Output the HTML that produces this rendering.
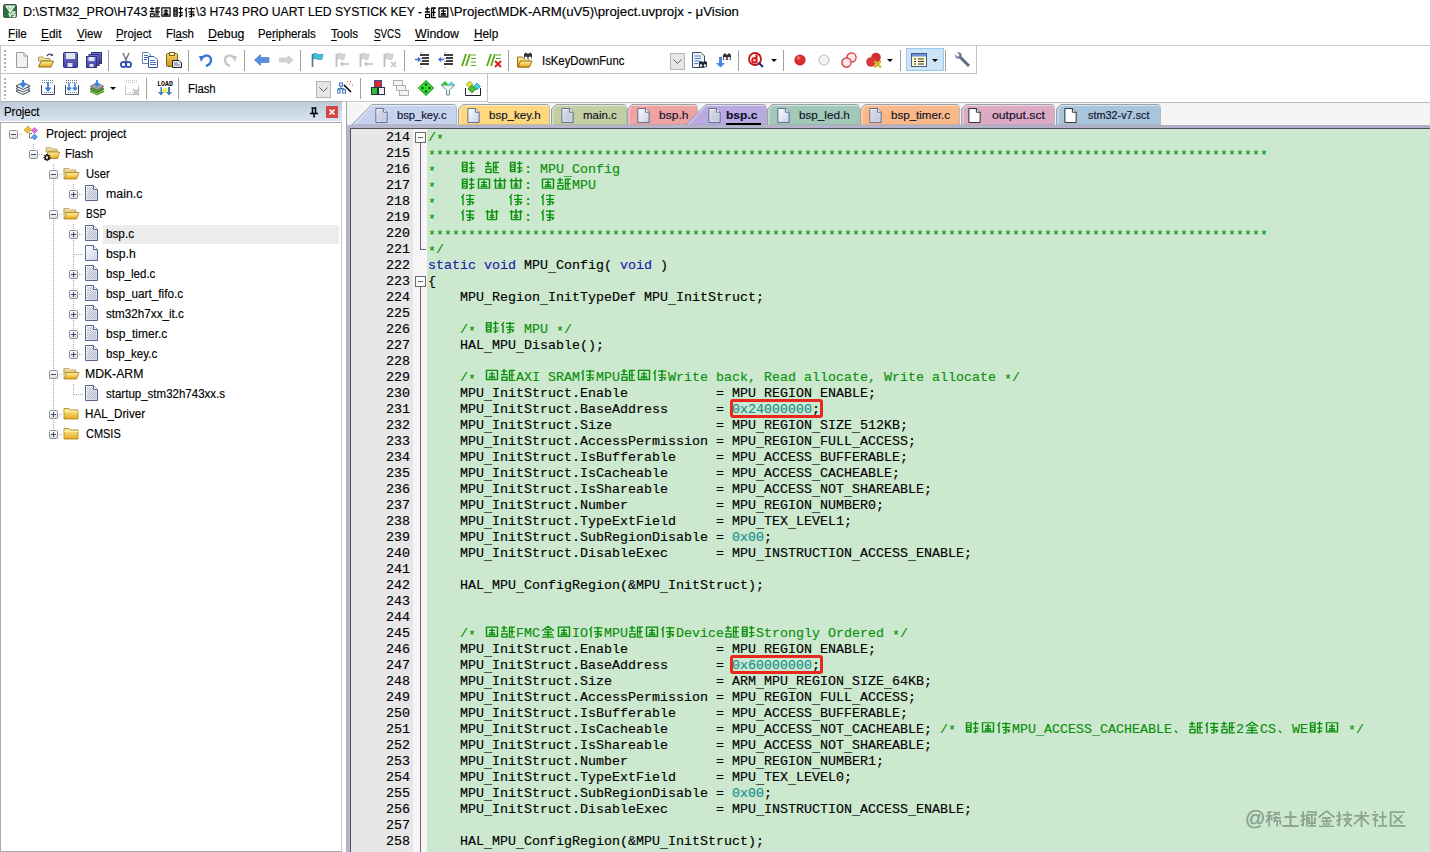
<!DOCTYPE html>
<html><head><meta charset="utf-8">
<style>
*{box-sizing:border-box}
html,body{margin:0;padding:0}
body{width:1430px;height:852px;overflow:hidden;position:relative;background:#fff;font-family:"Liberation Sans",sans-serif;color:#000}
.abs{position:absolute}
#title{left:0;top:0;width:1430px;height:23px;background:#fff}
#ticon{left:3px;top:4px;width:14px;height:14px;background:#2e7d3e;border-radius:2px}
#ttext{left:23px;top:3px;font-size:12px;line-height:16px;white-space:pre;color:#000;letter-spacing:0.15px}
.tcj{display:inline-block;width:12px;height:12px;vertical-align:-1px;margin:0 0.5px}
#menu{left:0;top:23px;width:1430px;height:22px}
.mi{position:absolute;top:4px;font-size:11.3px;line-height:14px;white-space:pre}
.fit{-webkit-text-stroke:0.15px currentColor}
.fit u{text-decoration:underline;text-underline-offset:1.5px;text-decoration-thickness:1px}
.mi u{text-decoration:none;border-bottom:1px solid #000}
svg{stroke-width:inherit}
#hl45{left:0;top:45px;width:1430px;height:1px;background:#c9c9c9}
.tb{position:absolute;background:#fff;border:1px solid #c4c4c4;border-top:none}
.sep{position:absolute;width:1px;background:#a0a0a0}
.grip{position:absolute;width:2px;background:repeating-linear-gradient(#b0b0b0 0 2px,transparent 2px 4px)}
.tbtext{font-size:11.3px;line-height:16px;white-space:pre}
#phdr{left:0;top:101px;width:342px;height:20px;background:linear-gradient(#bdcbd9,#d7e3ef);border-top:1px solid #a9b1b9}
#phdr span{position:absolute;left:4px;top:3px;font-size:12px;line-height:14px}
#tree{left:0;top:122px;width:342px;height:730px;border:1px solid #a8a8a8;border-right-color:#c8c8c8;background:#fff}
.tr{position:absolute;height:20px;font-size:11.5px;line-height:20px;white-space:pre}
.dv{position:absolute;width:1px;background:repeating-linear-gradient(#a8a8a8 0 1px,transparent 1px 2px)}
.dh{position:absolute;height:1px;background:repeating-linear-gradient(90deg,#a8a8a8 0 1px,transparent 1px 2px)}
#tabs{left:347px;top:103px;width:1083px;height:22px;background:#f5f5f5}
#vl346{left:346px;top:102px;width:1px;height:23px;background:#a4a4a4}
#hl101{left:488px;top:102px;width:942px;height:1px;background:#b8b8b8}
#inner{left:350px;top:128px;width:1080px;height:724px;background:#50505a}
#frame{left:346px;top:125px;width:1084px;height:727px;background:linear-gradient(90deg,#afadc3,#b8b6cc 3px,#b0aec6)}
#gut{left:351px;top:129px;width:62px;height:723px;background:#e7e7e7}
#fold{left:413px;top:129px;width:14px;height:723px;background:repeating-conic-gradient(#eeeeee 0 25%,#fefefe 0 50%) 0 0/2px 2px}
#code{left:427px;top:129px;width:1003px;height:723px;background:#cce8cf}
#nums{left:351px;top:130.25px;width:59px;text-align:right;font-family:"Liberation Mono",monospace;font-size:13.333px;line-height:17.3913px;color:#000;transform:scaleY(0.92);transform-origin:0 0;-webkit-text-stroke:0.15px #000}
#lines{left:428px;top:130.25px;font-family:"Liberation Mono",monospace;font-size:13.333px;line-height:17.3913px;white-space:pre;color:#000;transform:scaleY(0.92);transform-origin:0 0;-webkit-text-stroke:0.15px currentColor}
.ln{height:17.3913px}
.kw{color:#1a1aaa}
.cm{color:#0a900a}
.nm{color:#12918e}
.box{}
.st{position:relative;top:2px}
.us{position:relative;top:2px}
.rbox{position:absolute;width:93px;height:19px;border:3px solid #e8281e;border-radius:3px}
.cj{display:inline-block;width:16px;height:14.6px;margin-top:-1.6px;vertical-align:top;overflow:visible;-webkit-text-stroke:0;stroke-width:1.45}
</style></head><body>
<svg width="0" height="0" style="position:absolute">
<defs>

<linearGradient id="lg-box" x1="0" y1="0" x2="0" y2="1"><stop offset="0" stop-color="#ffffff"/><stop offset="1" stop-color="#dcdcdc"/></linearGradient>
<linearGradient id="lg-page" x1="0" y1="0" x2="1" y2="1"><stop offset="0" stop-color="#ffffff"/><stop offset="1" stop-color="#c8d0ec"/></linearGradient>
<linearGradient id="lg-fold" x1="0" y1="0" x2="0" y2="1"><stop offset="0" stop-color="#fff2a8"/><stop offset="1" stop-color="#e8a818"/></linearGradient>
<linearGradient id="lg-foldb" x1="0" y1="0" x2="0" y2="1"><stop offset="0" stop-color="#f4eab0"/><stop offset="1" stop-color="#d8c070"/></linearGradient>
<pattern id="pt-dots" width="2" height="2" patternUnits="userSpaceOnUse"><rect width="1" height="1" fill="#b8bcc8"/><rect x="1" y="1" width="1" height="1" fill="#b8bcc8"/></pattern>
<symbol id="i-minus" viewBox="0 0 9 9"><rect x="0.5" y="0.5" width="8" height="8" rx="1" fill="url(#lg-box)" stroke="#8e8e8e"/><path d="M2 4.5H7" stroke="#3a4a78"/></symbol>
<symbol id="i-plus" viewBox="0 0 9 9"><rect x="0.5" y="0.5" width="8" height="8" rx="1" fill="url(#lg-box)" stroke="#8e8e8e"/><path d="M2 4.5H7M4.5 2V7" stroke="#3a4a78"/></symbol>
<symbol id="i-filec" viewBox="0 0 13 16"><path d="M0.5 0.5H8.5L12.5 4.5V15.5H0.5Z" fill="url(#lg-page)" stroke="#56658a"/><path d="M2 2H8V6H11V14H2Z" fill="url(#pt-dots)"/><path d="M8.5 0.5V4.5H12.5" fill="#fff" stroke="#56658a"/></symbol>
<symbol id="i-fileh" viewBox="0 0 13 16"><path d="M0.5 0.5H8.5L12.5 4.5V15.5H0.5Z" fill="url(#lg-page)" stroke="#56658a"/><path d="M8.5 0.5V4.5H12.5" fill="#fff" stroke="#56658a"/></symbol>
<symbol id="i-filew" viewBox="0 0 13 16"><path d="M0.5 0.5H8.5L12.5 4.5V15.5H0.5Z" fill="#fff" stroke="#202020"/><path d="M8.5 0.5V4.5H12.5" fill="#fff" stroke="#202020"/></symbol>
<symbol id="i-fopen" viewBox="0 0 17 17"><path d="M1 3.5H6L7.5 5H13V8H1Z" fill="url(#lg-foldb)" stroke="#b8a060" stroke-width="0.8"/><path d="M1 14L3.5 7.5H16L13.5 14Z" fill="url(#lg-fold)" stroke="#a87808" stroke-width="0.8"/><path d="M1 3.5V14" stroke="#b8a060" stroke-width="0.8"/></symbol>
<symbol id="i-folder" viewBox="0 0 17 17"><path d="M1 3.5H6L7.5 5H15V14H1Z" fill="url(#lg-fold)" stroke="#a88010" stroke-width="0.8"/><path d="M1 6.5H15" stroke="#fff4b0" stroke-width="0.8"/></symbol>
<symbol id="i-flash" viewBox="0 0 17 17"><path d="M3 2.5H8L9.5 4H14V7H3Z" fill="url(#lg-foldb)" stroke="#b8a060" stroke-width="0.8"/><path d="M3 13.5L5 7H16.5L14.5 13.5Z" fill="url(#lg-fold)" stroke="#a87808" stroke-width="0.8"/><g stroke="#000" stroke-width="1.3"><path d="M4 9V16M0.5 12.5H7.5M1.5 10L6.5 15M6.5 10L1.5 15"/></g><circle cx="4" cy="12.5" r="1.2" fill="#fff"/></symbol>
<symbol id="i-proj" viewBox="0 0 17 17"><path d="M9 8.5H6.5V13H9" fill="none" stroke="#707880"/><path d="M1 5L5 1L8.5 4.5L4.5 8.5Z" fill="#e8c040" stroke="#c09010" stroke-width="0.6"/><path d="M8.5 5.5L11.5 2.5L14.5 5.5L11.5 8.5Z" fill="#e870e0" stroke="#b040b0" stroke-width="0.6"/><path d="M8.5 12L11.5 9L14.5 12L11.5 15Z" fill="#60a0f0" stroke="#3070c0" stroke-width="0.6"/></symbol>

<linearGradient id="lg-flop" x1="0" y1="0" x2="0" y2="1"><stop offset="0" stop-color="#7878d0"/><stop offset="1" stop-color="#4040a0"/></linearGradient>
<linearGradient id="lg-clip" x1="0" y1="0" x2="0" y2="1"><stop offset="0" stop-color="#f8d860"/><stop offset="1" stop-color="#c89020"/></linearGradient>
<symbol id="t-new" viewBox="0 0 16 16"><path d="M2.5 0.5H10L13.5 4V15.5H2.5Z" fill="#f2f2f6" stroke="#9a9a9a"/><path d="M10 0.5V4H13.5" fill="#fff" stroke="#9a9a9a"/></symbol>
<symbol id="t-open" viewBox="0 0 16 16"><path d="M0.5 5H5L6.5 6.5H12V9H0.5Z" fill="#efe0a0" stroke="#a08840" stroke-width="0.8"/><path d="M0.5 15L3 9H15.5L13 15Z" fill="url(#lg-fold)" stroke="#8a6408" stroke-width="0.9"/><path d="M9 4C10 1.5 13 1.5 14 3.5" fill="none" stroke="#3a3a5a" stroke-width="1.2"/><path d="M12.5 3.5L15 4L14.5 1.5Z" fill="#3a3a5a"/></symbol>
<symbol id="t-save" viewBox="0 0 16 16"><rect x="0.5" y="0.5" width="14" height="15" rx="1" fill="url(#lg-flop)" stroke="#303080"/><rect x="3" y="1" width="9" height="6" fill="#dde8f0"/><rect x="4.5" y="11" width="5" height="4" fill="#e0e0f0"/></symbol>
<symbol id="t-saveall" viewBox="0 0 16 16"><rect x="5.5" y="0.5" width="10" height="11" fill="url(#lg-flop)" stroke="#303080"/><rect x="3" y="2.5" width="10" height="11" fill="url(#lg-flop)" stroke="#303080"/><rect x="0.5" y="4.5" width="10" height="11" fill="url(#lg-flop)" stroke="#303080"/><rect x="2.5" y="5" width="6" height="4" fill="#dde8f0"/><rect x="3.5" y="12" width="4" height="3" fill="#e0e0f0"/></symbol>
<symbol id="t-cut" viewBox="0 0 16 16"><path d="M5 1L9 10M11 1L7 10" stroke="#707070" stroke-width="1.4"/><circle cx="5.5" cy="12.5" r="2.6" fill="none" stroke="#3050b8" stroke-width="1.8"/><circle cx="10.5" cy="12.5" r="2.6" fill="none" stroke="#3050b8" stroke-width="1.8"/></symbol>
<symbol id="t-copy" viewBox="0 0 16 16"><path d="M0.5 0.5H6L8.5 3V11.5H0.5Z" fill="#fff" stroke="#7080b0"/><path d="M6.5 4.5H12L15.5 8V15.5H6.5Z" fill="#fff" stroke="#3858a8"/><path d="M8 8.5H13M8 10.5H14M8 12.5H14M2 3.5H6M2 5.5H6M2 7.5H5" stroke="#4a6ac0" stroke-width="1"/></symbol>
<symbol id="t-paste" viewBox="0 0 16 16"><rect x="0.5" y="1.5" width="11" height="13" rx="1" fill="url(#lg-clip)" stroke="#806020"/><rect x="3.5" y="0.5" width="5" height="3" fill="#f8f0c0" stroke="#806020"/><path d="M6.5 8.5H13L15.5 11V15.5H6.5Z" fill="#e8ecf4" stroke="#202020"/><path d="M8 11H12M8 13H14" stroke="#6878a0"/></symbol>
<symbol id="t-undo" viewBox="0 0 16 16"><path d="M4 6C7 2 13 3 13 8C13 11 11 13 8 14" fill="none" stroke="#3a78d8" stroke-width="2.4"/><path d="M1 4L6.5 4L3 10Z" fill="#3a78d8"/></symbol>
<symbol id="t-redo" viewBox="0 0 16 16"><path d="M12 6C9 2 3 3 3 8C3 11 5 13 8 14" fill="none" stroke="#c8c8c8" stroke-width="2.4"/><path d="M15 4L9.5 4L13 10Z" fill="#c8c8c8"/></symbol>
<symbol id="t-back" viewBox="0 0 16 16"><path d="M0.5 8L6.5 2.5V5.5H15V10.5H6.5V13.5Z" fill="#5890e0" stroke="#3a70c8" stroke-width="0.6"/></symbol>
<symbol id="t-fwd" viewBox="0 0 16 16"><path d="M15.5 8L9.5 2.5V5.5H1V10.5H9.5V13.5Z" fill="#d0d0d0"/></symbol>
<symbol id="t-flag" viewBox="0 0 16 16"><path d="M2.5 2V15" stroke="#607080" stroke-width="1.6"/><path d="M3 2C6 0 8 4 13 2L12 7C8 9 6 5 3 7Z" fill="#40c0d8" stroke="#2090a8" stroke-width="0.7"/></symbol>
<symbol id="t-flagg" viewBox="0 0 16 16"><path d="M2.5 2V15" stroke="#c0c0c0" stroke-width="1.8"/><path d="M3 2C6 0 8 4 11 2L10 7C7 9 6 5 3 7Z" fill="#d4d4d4" stroke="#c0c0c0" stroke-width="0.8"/><path d="M7 12H15M9 10L7 12L9 14" fill="none" stroke="#c0c0c0" stroke-width="1.5"/></symbol>
<symbol id="t-flagx" viewBox="0 0 16 16"><path d="M2.5 2V15" stroke="#c0c0c0" stroke-width="1.8"/><path d="M3 2C6 0 8 4 11 2L10 7C7 9 6 5 3 7Z" fill="#d4d4d4" stroke="#c0c0c0" stroke-width="0.8"/><path d="M9 10L14 15M14 10L9 15" stroke="#c0c0c0" stroke-width="1.4"/></symbol>
<symbol id="t-indent" viewBox="0 0 16 16"><path d="M6 3H15M8 6H15M8 9H15M6 12H15" stroke="#000" stroke-width="1.6"/><path d="M1 7.5H6M4 5.5L6 7.5L4 9.5" fill="none" stroke="#3a70d8" stroke-width="1.3"/><path d="M7 0V16" stroke="#000" stroke-width="0.6" stroke-dasharray="1 2"/></symbol>
<symbol id="t-unindent" viewBox="0 0 16 16"><path d="M6 3H15M8 6H15M8 9H15M6 12H15" stroke="#000" stroke-width="1.6"/><path d="M1 7.5H6M3 5.5L1 7.5L3 9.5" fill="none" stroke="#3a70d8" stroke-width="1.3"/><path d="M7 0V16" stroke="#000" stroke-width="0.6" stroke-dasharray="1 2"/></symbol>
<symbol id="t-cmt" viewBox="0 0 16 16"><path d="M1 14L5 2M5 14L9 2" stroke="#58a818" stroke-width="1.8"/><path d="M10 3H15M10 6.5H15M10 10H15M10 13.5H15" stroke="#58a818" stroke-width="1"/></symbol>
<symbol id="t-uncmt" viewBox="0 0 16 16"><path d="M1 14L5 2M5 14L9 2" stroke="#58a818" stroke-width="1.8"/><path d="M10 3H15M10 6.5H15" stroke="#58a818" stroke-width="1"/><path d="M9 9L15 15M15 9L9 15" stroke="#e02020" stroke-width="2"/></symbol>
<symbol id="t-findf" viewBox="0 0 16 16"><path d="M0.5 5H5L6.5 6.5H12V15H0.5Z" fill="url(#lg-fold)" stroke="#8a6408" stroke-width="0.9"/><path d="M1 15L3.5 9H15L12.5 15Z" fill="url(#lg-fold)" stroke="#8a6408" stroke-width="0.9"/><path d="M7 2L9 0.5L11 2L13 0.5L15 2V7H7Z" fill="#303040"/><circle cx="9" cy="6" r="1.6" fill="#fff"/><circle cx="13" cy="6" r="1.6" fill="#fff"/></symbol>
<symbol id="t-find" viewBox="0 0 16 16"><path d="M0.5 0.5H9L12.5 4V15.5H0.5Z" fill="#eef2fa" stroke="#404a60"/><path d="M2.5 4H9M2.5 6.5H9M2.5 9H8M2.5 11.5H6" stroke="#4a7ad0" stroke-width="1.2"/><path d="M7 10L9 9L11 10L13 9L15 10V15H7Z" fill="#202830"/><circle cx="9" cy="13.5" r="1.2" fill="#fff"/><circle cx="13" cy="13.5" r="1.2" fill="#fff"/></symbol>
<symbol id="t-incf" viewBox="0 0 16 16"><path d="M3 5V11H0L4.5 15.5L9 11H6V5Z" fill="#4a88e0"/><path d="M7 3L9 1L11 3L13 1L15 3V8H7Z" fill="#303040"/><circle cx="9" cy="6.5" r="1.4" fill="#fff"/><circle cx="13" cy="6.5" r="1.4" fill="#fff"/></symbol>
<symbol id="t-debug" viewBox="0 0 16 16"><circle cx="7" cy="7" r="6" fill="#fff" stroke="#c01818" stroke-width="1.8"/><path d="M8.5 2.5V11M8.5 7.5A2.2 2.2 0 1 0 8.5 9" fill="none" stroke="#e02020" stroke-width="2.2"/><path d="M11 11L15 15" stroke="#202890" stroke-width="2.2"/></symbol>
<symbol id="t-bp" viewBox="0 0 16 16"><circle cx="8" cy="8" r="5.6" fill="#d82c2c"/><circle cx="6.5" cy="6" r="2" fill="#f08080" opacity="0.7"/></symbol>
<symbol id="t-bpg" viewBox="0 0 16 16"><circle cx="8" cy="8" r="5" fill="#f4f4f4" stroke="#c8c8c8" stroke-width="1.2"/></symbol>
<symbol id="t-bp2" viewBox="0 0 16 16"><circle cx="10.5" cy="5.5" r="4.6" fill="#fde8e8" stroke="#d02828" stroke-width="1.2"/><circle cx="5.5" cy="10.5" r="4.6" fill="#fde8e8" stroke="#d02828" stroke-width="1.2"/></symbol>
<symbol id="t-bpx" viewBox="0 0 16 16"><circle cx="10" cy="5.5" r="4.8" fill="#d03030"/><circle cx="5" cy="10" r="4.8" fill="#d83838"/><path d="M8.5 9L15 15.5M15 9L8.5 15.5" stroke="#c8b818" stroke-width="2.2"/></symbol>
<symbol id="t-win" viewBox="0 0 16 16"><rect x="0.5" y="1.5" width="15" height="13" fill="#fffbd0" stroke="#485890"/><rect x="1" y="2" width="14" height="2.5" fill="#6a90d8"/><path d="M3 7H5M3 9.5H5M3 12H5M7 7H13M7 9.5H13M7 12H13" stroke="#303030" stroke-width="1.1"/></symbol>
<symbol id="t-wrench" viewBox="0 0 16 16"><path d="M3 3L14 14" stroke="#5c6c88" stroke-width="3"/><circle cx="3.5" cy="3.5" r="3.2" fill="#6c7ca0"/><path d="M1.5 0L4.5 3L2.5 5L0 2Z" fill="#fff"/></symbol>
<symbol id="t-dl" viewBox="0 0 16 16"><path d="M1 11L8 7.5L15 11L8 14.5Z" fill="#fff" stroke="#404858"/><path d="M1 8.5L8 5L15 8.5L8 12Z" fill="#fff" stroke="#404858"/><path d="M1 6L8 2.5L15 6L8 9.5Z" fill="#f0f4ff" stroke="#404858"/><path d="M8 0V6M5.5 3.5L8 6.5L10.5 3.5" fill="none" stroke="#3a80e0" stroke-width="2"/></symbol>
<pattern id="pt-d2" width="2" height="2" patternUnits="userSpaceOnUse"><rect width="1" height="1" fill="#6a7890"/></pattern><pattern id="pt-d2g" width="2" height="2" patternUnits="userSpaceOnUse"><rect width="1" height="1" fill="#c4c4c4"/></pattern>
<symbol id="t-trans" viewBox="0 0 16 16"><path d="M1.5 5V14.5H14.5V5" fill="none" stroke="#404858"/><rect x="2" y="0" width="12" height="4" fill="url(#pt-d2)"/><rect x="3" y="12" width="10" height="2" fill="url(#pt-d2)"/><path d="M8 2V10M5.5 7.5L8 10.5L10.5 7.5" fill="none" stroke="#3a80e0" stroke-width="1.8"/></symbol>
<symbol id="t-build" viewBox="0 0 16 16"><path d="M1.5 5V14.5H14.5V5" fill="none" stroke="#404858"/><rect x="2" y="0" width="12" height="4" fill="url(#pt-d2)"/><rect x="3" y="12" width="10" height="2" fill="url(#pt-d2)"/><path d="M5 3V10M3 7.5L5 10L7 7.5M11 3V10M9 7.5L11 10L13 7.5" fill="none" stroke="#3a80e0" stroke-width="1.5"/></symbol>
<symbol id="t-rebuild" viewBox="0 0 16 16"><path d="M1 11.5L8 8L15 11.5L8 15Z" fill="#80c040" stroke="#408020" stroke-width="0.8"/><path d="M1 9L8 5.5L15 9L8 12.5Z" fill="#60a030" stroke="#306818" stroke-width="0.8"/><path d="M1 6.5L8 3L15 6.5L8 10Z" fill="#a0a0a8" stroke="#606068" stroke-width="0.8"/><path d="M8 0V5M6 3L8 5.5L10 3" fill="none" stroke="#3a80e0" stroke-width="1.8"/></symbol>
<symbol id="t-stop" viewBox="0 0 16 16"><path d="M1.5 5V14.5H14.5V5" fill="none" stroke="#c8c8c8"/><rect x="2" y="0" width="12" height="4" fill="url(#pt-d2g)"/><rect x="3" y="12" width="10" height="2" fill="url(#pt-d2g)"/><path d="M9 9L15 15M15 9L9 15" stroke="#c0c0c0" stroke-width="1.8"/></symbol>
<symbol id="t-load" viewBox="0 0 16 16"><text x="8" y="6" font-family="Liberation Mono" font-size="6.5" font-weight="bold" text-anchor="middle" fill="#000">LOAD</text><path d="M3.5 7V12H1L4 15.5L7 12H5V7ZM11 7V12H9L12 15.5L15 12H13V7Z" fill="#3a78d8"/><circle cx="8" cy="10.5" r="2.5" fill="#f0f040"/></symbol>
<symbol id="t-wiz" viewBox="0 0 16 16"><path d="M4 4V7M1 10V8.5H7V10M4 7V10" fill="none" stroke="#3a70c0"/><rect x="2.5" y="3" width="3" height="3" fill="#fff" stroke="#3a70c0"/><rect x="0" y="10" width="3" height="3" fill="#fff" stroke="#3a70c0"/><rect x="5.5" y="10" width="3" height="3" fill="#fff" stroke="#3a70c0"/><path d="M7 5L14 12" stroke="#000" stroke-width="1.6"/><path d="M10 1L11 2M13 2L14 1M15 5L16 5M12 4L13 4" stroke="#d04040"/></symbol>
<symbol id="t-blocks" viewBox="0 0 16 16"><rect x="4.5" y="0.5" width="7" height="7" fill="#e02828" stroke="#3050a0"/><rect x="1.5" y="7.5" width="6" height="7" fill="#30c030" stroke="#203040"/><rect x="8.5" y="7.5" width="6" height="7" fill="#f0f0f0" stroke="#203040"/></symbol>
<symbol id="t-wins" viewBox="0 0 16 16"><rect x="0.5" y="0.5" width="9" height="5" fill="#f4f4f4" stroke="#b0b0b0"/><rect x="3.5" y="5.5" width="9" height="5" fill="#f4f4f4" stroke="#b0b0b0"/><rect x="6.5" y="10.5" width="9" height="5" fill="#f4f4f4" stroke="#b0b0b0"/></symbol>
<symbol id="t-dia" viewBox="0 0 16 16"><path d="M8 0.5L15.5 8L8 15.5L0.5 8Z" fill="#30d830" stroke="#108010"/><circle cx="8" cy="4.5" r="1" fill="#000"/><circle cx="4.5" cy="8" r="1" fill="#000"/><circle cx="11.5" cy="8" r="1" fill="#000"/><circle cx="8" cy="11.5" r="1" fill="#000"/></symbol>
<symbol id="t-funnel" viewBox="0 0 16 16"><path d="M1 5H15L9.5 10V15H6.5V10Z" fill="#e8f8f8" stroke="#708890"/><path d="M1 5L5 1L9 5Z" fill="#30c030"/><path d="M8 5L11.5 1.5L15 5Z" fill="#40d0e0"/></symbol>
<symbol id="t-multi" viewBox="0 0 16 16"><path d="M0.5 8V15.5H15.5V8" fill="#fff" stroke="#202020"/><path d="M4.5 1L8 4.5L4.5 8L1 4.5Z" fill="#e0e040" stroke="#808020" stroke-width="0.6"/><path d="M12 3L15.5 6.5L12 10L8.5 6.5Z" fill="#40d0e0" stroke="#208090" stroke-width="0.6"/><path d="M7 5L11 9L7 13L3 9Z" fill="#50c030" stroke="#206010" stroke-width="0.6"/></symbol>

<symbol id="w-xi" viewBox="0 0 16 16"><path d="M1 5H7M4 1.5V15M4 6L1 11M4 6L7 9M2 2L6 1M8 1.5L14 4M14 1.5L8 4M7.5 7H15M10.5 5L8.5 11M9 9.5H14.5V13.5M11.5 9.5V15" stroke="currentColor" stroke-width="1.3" fill="none"/></symbol>
<symbol id="w-tu" viewBox="0 0 16 16"><path d="M2.5 6H13.5M8 1V14M0.5 14.5H15.5" stroke="currentColor" stroke-width="1.5" fill="none"/></symbol>
<symbol id="w-jue" viewBox="0 0 16 16"><path d="M0.5 5H5M3 1V14L1 13M0.5 10L5 8M6.5 1.5H15V4H6.5V15M8.5 6V12H14V6M11.2 5V14M8 14.5H15" stroke="currentColor" stroke-width="1.3" fill="none"/></symbol>
<symbol id="w-jin" viewBox="0 0 16 16"><path d="M8 0.5L0.5 6.5M8 0.5L15.5 6.5M4 7H12M3 10H13M8 7V15M5 11.5L6 13.5M11 11.5L10 13.5M1 15H15" stroke="currentColor" stroke-width="1.3" fill="none"/></symbol>
<symbol id="w-ji" viewBox="0 0 16 16"><path d="M0.5 5H5M3 1V14L1 13M0.5 10L5 8M6.5 4H15M10.8 1V8M7 8H14L8 15M8.5 9.5L15 15" stroke="currentColor" stroke-width="1.3" fill="none"/></symbol>
<symbol id="w-shu" viewBox="0 0 16 16"><path d="M1 5H15M8 1V15.5M8 6L1 13M8 6L15 13M11 1.5L12.5 3" stroke="currentColor" stroke-width="1.4" fill="none"/></symbol>
<symbol id="w-she" viewBox="0 0 16 16"><path d="M3 0.5L4 2M1 4H6L2 9M4 7V15.5M4 8L6.5 10M7.5 6H14.5M11 1V14.5M6.5 14.5H15.5" stroke="currentColor" stroke-width="1.3" fill="none"/></symbol>
<symbol id="w-qu" viewBox="0 0 16 16"><path d="M15 1.5H1.5V14.5H15.5M4.5 4.5L12.5 12M12.5 4.5L4.5 12" stroke="currentColor" stroke-width="1.4" fill="none"/></symbol>

<symbol id="g0" viewBox="0 0 16 16"><path d="M1.5 3.5H7M4 1V7M1 7.5H7.5M2 10V15M2 10.5H7V14.5H2M9 2.5H15M9.5 2.5V15M9.5 8H14.5M12 3V13M9.5 14.5H15" stroke="currentColor" fill="none"/></symbol>
<symbol id="g1" viewBox="0 0 16 16"><path d="M2.5 2V14M2.5 2.5H7V13.5H2.5M2.5 8H7M2.5 5.5H7M2.5 11H7M9 3.5H14.5M11.5 1V15M9 9H14.5M9.5 14L14.5 12" stroke="currentColor" fill="none"/></symbol>
<symbol id="g2" viewBox="0 0 16 16"><path d="M1.5 4.5H14.5M3.5 2V14M12.5 2V14M3.5 13.5H12.5M6 8.5H10M8 5V13M5.5 11H10.5M8 1V4" stroke="currentColor" fill="none"/></symbol>
<symbol id="g3" viewBox="0 0 16 16"><path d="M2.5 2.5H13.5V13.5H2.5ZM5 6.5H11M5 9.5H11M8 4V12M4.5 11.5H11.5" stroke="currentColor" fill="none"/></symbol>
<symbol id="g4" viewBox="0 0 16 16"><path d="M1.5 6L4 2M3 5V15M6 3.5H14.5M6 8H14M10 2V14.5H7M14 11L12 14M7 11H13" stroke="currentColor" fill="none"/></symbol>
<symbol id="g5" viewBox="0 0 16 16"><path d="M8 1.5L2 7M8 1.5L14 7M4 8.5H12M3 11.5H13M8 7V15M2 14.5H14M5 5.5H11" stroke="currentColor" fill="none"/></symbol>
<symbol id="gp" viewBox="0 0 16 16"><path d="M3 12L5 14.5" stroke="currentColor" stroke-width="1.5" fill="none"/></symbol>
</defs></svg>
<div id="title" class="abs">
  <svg class="abs" style="left:3px;top:4px" width="14" height="14"><rect x="0.5" y="0.5" width="13" height="13" rx="1.5" fill="#2d7042" stroke="#3c5a46"/><path d="M2 1.5H12.5L7.2 9.5Z" fill="#e4fae6"/><path d="M5.2 3L6.2 5.5M8.8 3L8 5.5" stroke="#4a8a5a" stroke-width="0.7"/><path d="M5.8 9L7.2 12.5L8.6 9" fill="none" stroke="#e4fae6" stroke-width="1.3"/><path d="M12.5 8H9.8V10.2H12V12.5H9.3" fill="none" stroke="#f0fff0" stroke-width="1.3"/></svg>
  
</div>
<div id="hl45" class="abs"></div>
<div class="tb" style="left:0;top:46px;width:977px;height:28px"></div>
<div class="tb" style="left:0;top:74px;width:488px;height:28px"></div>
<div class="grip" style="left:4px;top:50px;height:21px"></div><div class="grip" style="left:4px;top:78px;height:21px"></div><svg class="abs" style="left:14px;top:52px" width="16" height="16"><use href="#t-new"/></svg><svg class="abs" style="left:38px;top:52px" width="16" height="16"><use href="#t-open"/></svg><svg class="abs" style="left:63px;top:52px" width="16" height="16"><use href="#t-save"/></svg><svg class="abs" style="left:86px;top:52px" width="16" height="16"><use href="#t-saveall"/></svg><div class="sep" style="left:108px;top:50px;height:21px"></div><svg class="abs" style="left:118px;top:52px" width="16" height="16"><use href="#t-cut"/></svg><svg class="abs" style="left:142px;top:52px" width="16" height="16"><use href="#t-copy"/></svg><svg class="abs" style="left:166px;top:52px" width="16" height="16"><use href="#t-paste"/></svg><div class="sep" style="left:188px;top:50px;height:21px"></div><svg class="abs" style="left:198px;top:52px" width="16" height="16"><use href="#t-undo"/></svg><svg class="abs" style="left:222px;top:52px" width="16" height="16"><use href="#t-redo"/></svg><div class="sep" style="left:244px;top:50px;height:21px"></div><svg class="abs" style="left:254px;top:52px" width="16" height="16"><use href="#t-back"/></svg><svg class="abs" style="left:278px;top:52px" width="16" height="16"><use href="#t-fwd"/></svg><div class="sep" style="left:300px;top:50px;height:21px"></div><svg class="abs" style="left:310px;top:52px" width="16" height="16"><use href="#t-flag"/></svg><svg class="abs" style="left:334px;top:52px" width="16" height="16"><use href="#t-flagg"/></svg><svg class="abs" style="left:358px;top:52px" width="16" height="16"><use href="#t-flagg"/></svg><svg class="abs" style="left:382px;top:52px" width="16" height="16"><use href="#t-flagx"/></svg><div class="sep" style="left:404px;top:50px;height:21px"></div><svg class="abs" style="left:414px;top:52px" width="16" height="16"><use href="#t-indent"/></svg><svg class="abs" style="left:438px;top:52px" width="16" height="16"><use href="#t-unindent"/></svg><svg class="abs" style="left:461px;top:52px" width="16" height="16"><use href="#t-cmt"/></svg><svg class="abs" style="left:486px;top:52px" width="16" height="16"><use href="#t-uncmt"/></svg><div class="sep" style="left:508px;top:50px;height:21px"></div><svg class="abs" style="left:517px;top:52px" width="16" height="16"><use href="#t-findf"/></svg><div class="abs" style="left:670px;top:53px;width:15px;height:17px;background:#e6e6e6;border:1px solid #b4b4b4"></div><svg class="abs" style="left:673px;top:59px" width="9" height="5"><path d="M0.5 0.5L4.5 4.5L8.5 0.5" fill="none" stroke="#606060"/></svg><svg class="abs" style="left:692px;top:52px" width="16" height="16"><use href="#t-find"/></svg><svg class="abs" style="left:716px;top:52px" width="16" height="16"><use href="#t-incf"/></svg><div class="sep" style="left:738px;top:50px;height:21px"></div><svg class="abs" style="left:748px;top:52px" width="16" height="16"><use href="#t-debug"/></svg><div class="abs" style="left:771px;top:59px;width:0;height:0;border-left:3px solid transparent;border-right:3px solid transparent;border-top:3px solid #000"></div><div class="sep" style="left:783px;top:50px;height:21px"></div><svg class="abs" style="left:792px;top:52px" width="16" height="16"><use href="#t-bp"/></svg><svg class="abs" style="left:816px;top:52px" width="16" height="16"><use href="#t-bpg"/></svg><svg class="abs" style="left:841px;top:52px" width="16" height="16"><use href="#t-bp2"/></svg><svg class="abs" style="left:866px;top:52px" width="16" height="16"><use href="#t-bpx"/></svg><div class="abs" style="left:887px;top:59px;width:0;height:0;border-left:3px solid transparent;border-right:3px solid transparent;border-top:3px solid #000"></div><div class="sep" style="left:900px;top:50px;height:21px"></div><div class="abs" style="left:906px;top:48px;width:38px;height:23px;background:#cde4f7;border:1px solid #99c9ef"></div><svg class="abs" style="left:911px;top:52px" width="16" height="16"><use href="#t-win"/></svg><div class="abs" style="left:932px;top:59px;width:0;height:0;border-left:3px solid transparent;border-right:3px solid transparent;border-top:3px solid #000"></div><div class="sep" style="left:945px;top:50px;height:21px"></div><svg class="abs" style="left:955px;top:52px" width="16" height="16"><use href="#t-wrench"/></svg><svg class="abs" style="left:15px;top:80px" width="16" height="16"><use href="#t-dl"/></svg><svg class="abs" style="left:40px;top:80px" width="16" height="16"><use href="#t-trans"/></svg><svg class="abs" style="left:64px;top:80px" width="16" height="16"><use href="#t-build"/></svg><svg class="abs" style="left:89px;top:80px" width="16" height="16"><use href="#t-rebuild"/></svg><div class="abs" style="left:110px;top:87px;width:0;height:0;border-left:3px solid transparent;border-right:3px solid transparent;border-top:3px solid #000"></div><svg class="abs" style="left:124px;top:80px" width="16" height="16"><use href="#t-stop"/></svg><div class="sep" style="left:146px;top:78px;height:21px"></div><svg class="abs" style="left:157px;top:80px" width="16" height="16"><use href="#t-load"/></svg><div class="sep" style="left:178px;top:78px;height:21px"></div><div class="abs" style="left:316px;top:81px;width:15px;height:17px;background:#e6e6e6;border:1px solid #b4b4b4"></div><svg class="abs" style="left:319px;top:87px" width="9" height="5"><path d="M0.5 0.5L4.5 4.5L8.5 0.5" fill="none" stroke="#606060"/></svg><svg class="abs" style="left:337px;top:80px" width="16" height="16"><use href="#t-wiz"/></svg><div class="sep" style="left:360px;top:78px;height:21px"></div><svg class="abs" style="left:370px;top:80px" width="16" height="16"><use href="#t-blocks"/></svg><svg class="abs" style="left:393px;top:80px" width="16" height="16"><use href="#t-wins"/></svg><svg class="abs" style="left:418px;top:80px" width="16" height="16"><use href="#t-dia"/></svg><svg class="abs" style="left:440px;top:80px" width="16" height="16"><use href="#t-funnel"/></svg><svg class="abs" style="left:465px;top:80px" width="16" height="16"><use href="#t-multi"/></svg>
<div id="phdr" class="abs"></div>
<svg class="abs" style="left:309px;top:107px" width="10" height="11"><path d="M2.5 1H7.5M3.5 1.5V6.5M6.5 1.5V6.5M1 6.5H9M5 6.5V10.5" stroke="#000" stroke-width="1.5" fill="none"/></svg>
<div class="abs" style="left:326px;top:106px;width:12px;height:12px;background:#d64545"></div>
<svg class="abs" style="left:326px;top:106px" width="12" height="12"><path d="M3.5 3.5L8.5 8.5M8.5 3.5L3.5 8.5" stroke="#fff" stroke-width="1.6"/></svg>
<div id="tree" class="abs"></div>
<div class="abs" style="left:103px;top:225px;width:236px;height:19px;background:#ececec"></div><div class="dv" style="left:33px;top:144px;height:6px"></div><div class="dv" style="left:53px;top:164px;height:266px"></div><div class="dv" style="left:73px;top:184px;height:6px"></div><div class="dv" style="left:73px;top:224px;height:126px"></div><div class="dv" style="left:73px;top:264px;height:-9px"></div><div class="dv" style="left:73px;top:384px;height:11px"></div><svg class="abs" style="left:9px;top:130px" width="9" height="9"><use href="#i-minus"/></svg><div class="dh" style="left:19px;top:134px;width:4px"></div><svg class="abs" style="left:23px;top:125px" width="17" height="17"><use href="#i-proj"/></svg><svg class="abs" style="left:29px;top:150px" width="9" height="9"><use href="#i-minus"/></svg><div class="dh" style="left:39px;top:154px;width:4px"></div><svg class="abs" style="left:43px;top:145px" width="17" height="17"><use href="#i-flash"/></svg><svg class="abs" style="left:49px;top:170px" width="9" height="9"><use href="#i-minus"/></svg><div class="dh" style="left:59px;top:174px;width:4px"></div><svg class="abs" style="left:63px;top:165px" width="17" height="17"><use href="#i-fopen"/></svg><svg class="abs" style="left:69px;top:190px" width="9" height="9"><use href="#i-plus"/></svg><div class="dh" style="left:79px;top:194px;width:4px"></div><svg class="abs" style="left:85px;top:185px" width="13" height="16"><use href="#i-filec"/></svg><svg class="abs" style="left:49px;top:210px" width="9" height="9"><use href="#i-minus"/></svg><div class="dh" style="left:59px;top:214px;width:4px"></div><svg class="abs" style="left:63px;top:205px" width="17" height="17"><use href="#i-fopen"/></svg><svg class="abs" style="left:69px;top:230px" width="9" height="9"><use href="#i-plus"/></svg><div class="dh" style="left:79px;top:234px;width:4px"></div><svg class="abs" style="left:85px;top:225px" width="13" height="16"><use href="#i-filec"/></svg><div class="dh" style="left:74px;top:254px;width:9px"></div><svg class="abs" style="left:85px;top:245px" width="13" height="16"><use href="#i-fileh"/></svg><svg class="abs" style="left:69px;top:270px" width="9" height="9"><use href="#i-plus"/></svg><div class="dh" style="left:79px;top:274px;width:4px"></div><svg class="abs" style="left:85px;top:265px" width="13" height="16"><use href="#i-filec"/></svg><svg class="abs" style="left:69px;top:290px" width="9" height="9"><use href="#i-plus"/></svg><div class="dh" style="left:79px;top:294px;width:4px"></div><svg class="abs" style="left:85px;top:285px" width="13" height="16"><use href="#i-filec"/></svg><svg class="abs" style="left:69px;top:310px" width="9" height="9"><use href="#i-plus"/></svg><div class="dh" style="left:79px;top:314px;width:4px"></div><svg class="abs" style="left:85px;top:305px" width="13" height="16"><use href="#i-filec"/></svg><svg class="abs" style="left:69px;top:330px" width="9" height="9"><use href="#i-plus"/></svg><div class="dh" style="left:79px;top:334px;width:4px"></div><svg class="abs" style="left:85px;top:325px" width="13" height="16"><use href="#i-filec"/></svg><svg class="abs" style="left:69px;top:350px" width="9" height="9"><use href="#i-plus"/></svg><div class="dh" style="left:79px;top:354px;width:4px"></div><svg class="abs" style="left:85px;top:345px" width="13" height="16"><use href="#i-filec"/></svg><svg class="abs" style="left:49px;top:370px" width="9" height="9"><use href="#i-minus"/></svg><div class="dh" style="left:59px;top:374px;width:4px"></div><svg class="abs" style="left:63px;top:365px" width="17" height="17"><use href="#i-fopen"/></svg><div class="dh" style="left:74px;top:394px;width:9px"></div><svg class="abs" style="left:85px;top:385px" width="13" height="16"><use href="#i-filec"/></svg><svg class="abs" style="left:49px;top:410px" width="9" height="9"><use href="#i-plus"/></svg><div class="dh" style="left:59px;top:414px;width:4px"></div><svg class="abs" style="left:63px;top:405px" width="17" height="17"><use href="#i-folder"/></svg><svg class="abs" style="left:49px;top:430px" width="9" height="9"><use href="#i-plus"/></svg><div class="dh" style="left:59px;top:434px;width:4px"></div><svg class="abs" style="left:63px;top:425px" width="17" height="17"><use href="#i-folder"/></svg>
<div id="hl101" class="abs"></div>
<div id="tabs" class="abs"></div>
<div id="vl346" class="abs"></div>
<div id="frame" class="abs"></div>
<div id="inner" class="abs"></div>
<svg class="abs" style="left:351px;top:104px" width="106" height="21"><path d="M0.5 21 L21 0.5 H102.5 Q105.5 0.5 105.5 3.5 V21Z" fill="#c6d3ee" stroke="#9aa0aa" stroke-width="1"/><path d="M1.5 21 L21 0.5 H102.5 Q105.5 0.5 105.5 3.5 V21" fill="none" stroke="rgba(255,255,255,0.55)" stroke-width="1" transform="translate(0.5,1)"/></svg><svg class="abs" style="left:375px;top:108px" width="13" height="15"><use href="#i-filec"/></svg><div class="fit" style="position:absolute;left:396.87px;top:109px;font-family:'Liberation Sans',sans-serif;font-weight:normal;font-size:11px;line-height:13.75px;white-space:pre;transform-origin:0 0;transform:scaleX(1.0171);color:#10102a;">bsp_key.c</div><svg class="abs" style="left:458px;top:104px" width="92" height="21"><path d="M0.5 21 V5 L5 0.5 H88.5 Q91.5 0.5 91.5 3.5 V21Z" fill="#fdd87c" stroke="#9aa0aa" stroke-width="1"/><path d="M1.5 21 V5 L5 0.5 H88.5 Q91.5 0.5 91.5 3.5 V21" fill="none" stroke="rgba(255,255,255,0.55)" stroke-width="1" transform="translate(0.5,1)"/></svg><svg class="abs" style="left:467px;top:108px" width="13" height="15"><use href="#i-fileh"/></svg><div class="fit" style="position:absolute;left:488.85px;top:109px;font-family:'Liberation Sans',sans-serif;font-weight:normal;font-size:11px;line-height:13.75px;white-space:pre;transform-origin:0 0;transform:scaleX(1.0479);color:#10102a;">bsp_key.h</div><svg class="abs" style="left:551px;top:104px" width="76" height="21"><path d="M0.5 21 V5 L5 0.5 H72.5 Q75.5 0.5 75.5 3.5 V21Z" fill="#c3cfa2" stroke="#9aa0aa" stroke-width="1"/><path d="M1.5 21 V5 L5 0.5 H72.5 Q75.5 0.5 75.5 3.5 V21" fill="none" stroke="rgba(255,255,255,0.55)" stroke-width="1" transform="translate(0.5,1)"/></svg><svg class="abs" style="left:561px;top:108px" width="13" height="15"><use href="#i-filec"/></svg><div class="fit" style="position:absolute;left:582.73px;top:109px;font-family:'Liberation Sans',sans-serif;font-weight:normal;font-size:11px;line-height:13.75px;white-space:pre;transform-origin:0 0;transform:scaleX(1.0431);color:#10102a;">main.c</div><svg class="abs" style="left:627px;top:104px" width="71" height="21"><path d="M0.5 21 V5 L5 0.5 H67.5 Q70.5 0.5 70.5 3.5 V21Z" fill="#eea2a2" stroke="#9aa0aa" stroke-width="1"/><path d="M1.5 21 V5 L5 0.5 H67.5 Q70.5 0.5 70.5 3.5 V21" fill="none" stroke="rgba(255,255,255,0.55)" stroke-width="1" transform="translate(0.5,1)"/></svg><svg class="abs" style="left:637px;top:108px" width="13" height="15"><use href="#i-fileh"/></svg><div class="fit" style="position:absolute;left:658.72px;top:109px;font-family:'Liberation Sans',sans-serif;font-weight:normal;font-size:11px;line-height:13.75px;white-space:pre;transform-origin:0 0;transform:scaleX(1.0944);color:#10102a;">bsp.h</div><svg class="abs" style="left:767px;top:104px" width="93" height="21"><path d="M0.5 21 V5 L5 0.5 H89.5 Q92.5 0.5 92.5 3.5 V21Z" fill="#a2c8b8" stroke="#9aa0aa" stroke-width="1"/><path d="M1.5 21 V5 L5 0.5 H89.5 Q92.5 0.5 92.5 3.5 V21" fill="none" stroke="rgba(255,255,255,0.55)" stroke-width="1" transform="translate(0.5,1)"/></svg><svg class="abs" style="left:777px;top:108px" width="13" height="15"><use href="#i-fileh"/></svg><div class="fit" style="position:absolute;left:798.84px;top:109px;font-family:'Liberation Sans',sans-serif;font-weight:normal;font-size:11px;line-height:13.75px;white-space:pre;transform-origin:0 0;transform:scaleX(1.0630);color:#10102a;">bsp_led.h</div><svg class="abs" style="left:860px;top:104px" width="100" height="21"><path d="M0.5 21 V5 L5 0.5 H96.5 Q99.5 0.5 99.5 3.5 V21Z" fill="#f8b888" stroke="#9aa0aa" stroke-width="1"/><path d="M1.5 21 V5 L5 0.5 H96.5 Q99.5 0.5 99.5 3.5 V21" fill="none" stroke="rgba(255,255,255,0.55)" stroke-width="1" transform="translate(0.5,1)"/></svg><svg class="abs" style="left:869px;top:108px" width="13" height="15"><use href="#i-filec"/></svg><div class="fit" style="position:absolute;left:890.65px;top:109px;font-family:'Liberation Sans',sans-serif;font-weight:normal;font-size:11px;line-height:13.75px;white-space:pre;transform-origin:0 0;transform:scaleX(1.0503);color:#10102a;">bsp_timer.c</div><svg class="abs" style="left:961px;top:104px" width="94" height="21"><path d="M0.5 21 V5 L5 0.5 H90.5 Q93.5 0.5 93.5 3.5 V21Z" fill="#dcaac2" stroke="#9aa0aa" stroke-width="1"/><path d="M1.5 21 V5 L5 0.5 H90.5 Q93.5 0.5 93.5 3.5 V21" fill="none" stroke="rgba(255,255,255,0.55)" stroke-width="1" transform="translate(0.5,1)"/></svg><svg class="abs" style="left:968px;top:108px" width="13" height="15"><use href="#i-filew"/></svg><div class="fit" style="position:absolute;left:992.18px;top:109px;font-family:'Liberation Sans',sans-serif;font-weight:normal;font-size:11px;line-height:13.75px;white-space:pre;transform-origin:0 0;transform:scaleX(1.1096);color:#10102a;">output.sct</div><svg class="abs" style="left:1056px;top:104px" width="105" height="21"><path d="M0.5 21 V5 L5 0.5 H101.5 Q104.5 0.5 104.5 3.5 V21Z" fill="#a9c5dc" stroke="#9aa0aa" stroke-width="1"/><path d="M1.5 21 V5 L5 0.5 H101.5 Q104.5 0.5 104.5 3.5 V21" fill="none" stroke="rgba(255,255,255,0.55)" stroke-width="1" transform="translate(0.5,1)"/></svg><svg class="abs" style="left:1064px;top:108px" width="13" height="15"><use href="#i-filew"/></svg><div class="fit" style="position:absolute;left:1088.20px;top:109px;font-family:'Liberation Sans',sans-serif;font-weight:normal;font-size:11px;line-height:13.75px;white-space:pre;transform-origin:0 0;transform:scaleX(0.9862);color:#10102a;">stm32-v7.sct</div><svg class="abs" style="left:685px;top:104px" width="82" height="21"><path d="M0.5 21 L21 0.5 H78.5 Q81.5 0.5 81.5 3.5 V21Z" fill="#b9aae2" stroke="#9aa0aa" stroke-width="1"/><path d="M1.5 21 L21 0.5 H78.5 Q81.5 0.5 81.5 3.5 V21" fill="none" stroke="rgba(255,255,255,0.55)" stroke-width="1" transform="translate(0.5,1)"/></svg><svg class="abs" style="left:708px;top:108px" width="13" height="15"><use href="#i-filec"/></svg><div class="fit" style="position:absolute;left:725.82px;top:109px;font-family:'Liberation Sans',sans-serif;font-weight:bold;font-size:11px;line-height:13.75px;white-space:pre;transform-origin:0 0;transform:scaleX(1.0942);color:#10102a;">bsp.c</div><div class="abs" style="left:726px;top:123px;width:35px;height:2px;background:#000"></div>
<div id="gut" class="abs"></div>
<div id="fold" class="abs"></div>
<div id="code" class="abs"></div>
<svg class="abs" style="left:413px;top:129px" width="14" height="723"><g fill="none" stroke="#6a6a6a" shape-rendering="crispEdges"><rect x="2.5" y="3.5" width="10" height="10" fill="#fbfbfb"/><path d="M5 8.5H10"/><path d="M7.5 14V120.5H13"/><rect x="2.5" y="147.5" width="10" height="10" fill="#fbfbfb"/><path d="M5 152.5H10"/><path d="M7.5 158V723"/></g></svg>
<div id="nums" class="abs"><div>214</div><div>215</div><div>216</div><div>217</div><div>218</div><div>219</div><div>220</div><div>221</div><div>222</div><div>223</div><div>224</div><div>225</div><div>226</div><div>227</div><div>228</div><div>229</div><div>230</div><div>231</div><div>232</div><div>233</div><div>234</div><div>235</div><div>236</div><div>237</div><div>238</div><div>239</div><div>240</div><div>241</div><div>242</div><div>243</div><div>244</div><div>245</div><div>246</div><div>247</div><div>248</div><div>249</div><div>250</div><div>251</div><div>252</div><div>253</div><div>254</div><div>255</div><div>256</div><div>257</div><div>258</div></div>
<div id="lines" class="abs"><div class="ln"><span class="cm">/<span class="st">*</span></span></div><div class="ln"><span class="cm"><span class="st">*</span><span class="st">*</span><span class="st">*</span><span class="st">*</span><span class="st">*</span><span class="st">*</span><span class="st">*</span><span class="st">*</span><span class="st">*</span><span class="st">*</span><span class="st">*</span><span class="st">*</span><span class="st">*</span><span class="st">*</span><span class="st">*</span><span class="st">*</span><span class="st">*</span><span class="st">*</span><span class="st">*</span><span class="st">*</span><span class="st">*</span><span class="st">*</span><span class="st">*</span><span class="st">*</span><span class="st">*</span><span class="st">*</span><span class="st">*</span><span class="st">*</span><span class="st">*</span><span class="st">*</span><span class="st">*</span><span class="st">*</span><span class="st">*</span><span class="st">*</span><span class="st">*</span><span class="st">*</span><span class="st">*</span><span class="st">*</span><span class="st">*</span><span class="st">*</span><span class="st">*</span><span class="st">*</span><span class="st">*</span><span class="st">*</span><span class="st">*</span><span class="st">*</span><span class="st">*</span><span class="st">*</span><span class="st">*</span><span class="st">*</span><span class="st">*</span><span class="st">*</span><span class="st">*</span><span class="st">*</span><span class="st">*</span><span class="st">*</span><span class="st">*</span><span class="st">*</span><span class="st">*</span><span class="st">*</span><span class="st">*</span><span class="st">*</span><span class="st">*</span><span class="st">*</span><span class="st">*</span><span class="st">*</span><span class="st">*</span><span class="st">*</span><span class="st">*</span><span class="st">*</span><span class="st">*</span><span class="st">*</span><span class="st">*</span><span class="st">*</span><span class="st">*</span><span class="st">*</span><span class="st">*</span><span class="st">*</span><span class="st">*</span><span class="st">*</span><span class="st">*</span><span class="st">*</span><span class="st">*</span><span class="st">*</span><span class="st">*</span><span class="st">*</span><span class="st">*</span><span class="st">*</span><span class="st">*</span><span class="st">*</span><span class="st">*</span><span class="st">*</span><span class="st">*</span><span class="st">*</span><span class="st">*</span><span class="st">*</span><span class="st">*</span><span class="st">*</span><span class="st">*</span><span class="st">*</span><span class="st">*</span><span class="st">*</span><span class="st">*</span><span class="st">*</span><span class="st">*</span></span></div><div class="ln"><span class="cm"><span class="st">*</span>   <svg class="cj" preserveAspectRatio="none" viewBox="0 0 16 16"><use href="#g1"/></svg> <svg class="cj" preserveAspectRatio="none" viewBox="0 0 16 16"><use href="#g0"/></svg> <svg class="cj" preserveAspectRatio="none" viewBox="0 0 16 16"><use href="#g1"/></svg>: MPU<span class="us">_</span>Config</span></div><div class="ln"><span class="cm"><span class="st">*</span>   <svg class="cj" preserveAspectRatio="none" viewBox="0 0 16 16"><use href="#g1"/></svg><svg class="cj" preserveAspectRatio="none" viewBox="0 0 16 16"><use href="#g3"/></svg><svg class="cj" preserveAspectRatio="none" viewBox="0 0 16 16"><use href="#g2"/></svg><svg class="cj" preserveAspectRatio="none" viewBox="0 0 16 16"><use href="#g2"/></svg>: <svg class="cj" preserveAspectRatio="none" viewBox="0 0 16 16"><use href="#g3"/></svg><svg class="cj" preserveAspectRatio="none" viewBox="0 0 16 16"><use href="#g0"/></svg>MPU</span></div><div class="ln"><span class="cm"><span class="st">*</span>   <svg class="cj" preserveAspectRatio="none" viewBox="0 0 16 16"><use href="#g4"/></svg>    <svg class="cj" preserveAspectRatio="none" viewBox="0 0 16 16"><use href="#g4"/></svg>: <svg class="cj" preserveAspectRatio="none" viewBox="0 0 16 16"><use href="#g4"/></svg></span></div><div class="ln"><span class="cm"><span class="st">*</span>   <svg class="cj" preserveAspectRatio="none" viewBox="0 0 16 16"><use href="#g4"/></svg> <svg class="cj" preserveAspectRatio="none" viewBox="0 0 16 16"><use href="#g2"/></svg> <svg class="cj" preserveAspectRatio="none" viewBox="0 0 16 16"><use href="#g2"/></svg>: <svg class="cj" preserveAspectRatio="none" viewBox="0 0 16 16"><use href="#g4"/></svg></span></div><div class="ln"><span class="cm"><span class="st">*</span><span class="st">*</span><span class="st">*</span><span class="st">*</span><span class="st">*</span><span class="st">*</span><span class="st">*</span><span class="st">*</span><span class="st">*</span><span class="st">*</span><span class="st">*</span><span class="st">*</span><span class="st">*</span><span class="st">*</span><span class="st">*</span><span class="st">*</span><span class="st">*</span><span class="st">*</span><span class="st">*</span><span class="st">*</span><span class="st">*</span><span class="st">*</span><span class="st">*</span><span class="st">*</span><span class="st">*</span><span class="st">*</span><span class="st">*</span><span class="st">*</span><span class="st">*</span><span class="st">*</span><span class="st">*</span><span class="st">*</span><span class="st">*</span><span class="st">*</span><span class="st">*</span><span class="st">*</span><span class="st">*</span><span class="st">*</span><span class="st">*</span><span class="st">*</span><span class="st">*</span><span class="st">*</span><span class="st">*</span><span class="st">*</span><span class="st">*</span><span class="st">*</span><span class="st">*</span><span class="st">*</span><span class="st">*</span><span class="st">*</span><span class="st">*</span><span class="st">*</span><span class="st">*</span><span class="st">*</span><span class="st">*</span><span class="st">*</span><span class="st">*</span><span class="st">*</span><span class="st">*</span><span class="st">*</span><span class="st">*</span><span class="st">*</span><span class="st">*</span><span class="st">*</span><span class="st">*</span><span class="st">*</span><span class="st">*</span><span class="st">*</span><span class="st">*</span><span class="st">*</span><span class="st">*</span><span class="st">*</span><span class="st">*</span><span class="st">*</span><span class="st">*</span><span class="st">*</span><span class="st">*</span><span class="st">*</span><span class="st">*</span><span class="st">*</span><span class="st">*</span><span class="st">*</span><span class="st">*</span><span class="st">*</span><span class="st">*</span><span class="st">*</span><span class="st">*</span><span class="st">*</span><span class="st">*</span><span class="st">*</span><span class="st">*</span><span class="st">*</span><span class="st">*</span><span class="st">*</span><span class="st">*</span><span class="st">*</span><span class="st">*</span><span class="st">*</span><span class="st">*</span><span class="st">*</span><span class="st">*</span><span class="st">*</span><span class="st">*</span><span class="st">*</span><span class="st">*</span></span></div><div class="ln"><span class="cm"><span class="st">*</span>/</span></div><div class="ln"><span class="kw">static</span> <span class="kw">void</span> MPU<span class="us">_</span>Config( <span class="kw">void</span> )</div><div class="ln">{</div><div class="ln">    MPU<span class="us">_</span>Region<span class="us">_</span>InitTypeDef MPU<span class="us">_</span>InitStruct;</div><div class="ln"></div><div class="ln">    <span class="cm">/<span class="st">*</span> <svg class="cj" preserveAspectRatio="none" viewBox="0 0 16 16"><use href="#g1"/></svg><svg class="cj" preserveAspectRatio="none" viewBox="0 0 16 16"><use href="#g4"/></svg> MPU <span class="st">*</span>/</span></div><div class="ln">    HAL<span class="us">_</span>MPU<span class="us">_</span>Disable();</div><div class="ln"></div><div class="ln">    <span class="cm">/<span class="st">*</span> <svg class="cj" preserveAspectRatio="none" viewBox="0 0 16 16"><use href="#g3"/></svg><svg class="cj" preserveAspectRatio="none" viewBox="0 0 16 16"><use href="#g0"/></svg>AXI SRAM<svg class="cj" preserveAspectRatio="none" viewBox="0 0 16 16"><use href="#g4"/></svg>MPU<svg class="cj" preserveAspectRatio="none" viewBox="0 0 16 16"><use href="#g0"/></svg><svg class="cj" preserveAspectRatio="none" viewBox="0 0 16 16"><use href="#g3"/></svg><svg class="cj" preserveAspectRatio="none" viewBox="0 0 16 16"><use href="#g4"/></svg>Write back, Read allocate, Write allocate <span class="st">*</span>/</span></div><div class="ln">    MPU<span class="us">_</span>InitStruct.Enable           = MPU<span class="us">_</span>REGION<span class="us">_</span>ENABLE;</div><div class="ln">    MPU<span class="us">_</span>InitStruct.BaseAddress      = <span class="box"><span class="nm">0x24000000</span>;</span></div><div class="ln">    MPU<span class="us">_</span>InitStruct.Size             = MPU<span class="us">_</span>REGION<span class="us">_</span>SIZE<span class="us">_</span>512KB;</div><div class="ln">    MPU<span class="us">_</span>InitStruct.AccessPermission = MPU<span class="us">_</span>REGION<span class="us">_</span>FULL<span class="us">_</span>ACCESS;</div><div class="ln">    MPU<span class="us">_</span>InitStruct.IsBufferable     = MPU<span class="us">_</span>ACCESS<span class="us">_</span>BUFFERABLE;</div><div class="ln">    MPU<span class="us">_</span>InitStruct.IsCacheable      = MPU<span class="us">_</span>ACCESS<span class="us">_</span>CACHEABLE;</div><div class="ln">    MPU<span class="us">_</span>InitStruct.IsShareable      = MPU<span class="us">_</span>ACCESS<span class="us">_</span>NOT<span class="us">_</span>SHAREABLE;</div><div class="ln">    MPU<span class="us">_</span>InitStruct.Number           = MPU<span class="us">_</span>REGION<span class="us">_</span>NUMBER0;</div><div class="ln">    MPU<span class="us">_</span>InitStruct.TypeExtField     = MPU<span class="us">_</span>TEX<span class="us">_</span>LEVEL1;</div><div class="ln">    MPU<span class="us">_</span>InitStruct.SubRegionDisable = <span class="nm">0x00</span>;</div><div class="ln">    MPU<span class="us">_</span>InitStruct.DisableExec      = MPU<span class="us">_</span>INSTRUCTION<span class="us">_</span>ACCESS<span class="us">_</span>ENABLE;</div><div class="ln"></div><div class="ln">    HAL<span class="us">_</span>MPU<span class="us">_</span>ConfigRegion(&amp;MPU<span class="us">_</span>InitStruct);</div><div class="ln"></div><div class="ln"></div><div class="ln">    <span class="cm">/<span class="st">*</span> <svg class="cj" preserveAspectRatio="none" viewBox="0 0 16 16"><use href="#g3"/></svg><svg class="cj" preserveAspectRatio="none" viewBox="0 0 16 16"><use href="#g0"/></svg>FMC<svg class="cj" preserveAspectRatio="none" viewBox="0 0 16 16"><use href="#g5"/></svg><svg class="cj" preserveAspectRatio="none" viewBox="0 0 16 16"><use href="#g3"/></svg>IO<svg class="cj" preserveAspectRatio="none" viewBox="0 0 16 16"><use href="#g4"/></svg>MPU<svg class="cj" preserveAspectRatio="none" viewBox="0 0 16 16"><use href="#g0"/></svg><svg class="cj" preserveAspectRatio="none" viewBox="0 0 16 16"><use href="#g3"/></svg><svg class="cj" preserveAspectRatio="none" viewBox="0 0 16 16"><use href="#g4"/></svg>Device<svg class="cj" preserveAspectRatio="none" viewBox="0 0 16 16"><use href="#g0"/></svg><svg class="cj" preserveAspectRatio="none" viewBox="0 0 16 16"><use href="#g1"/></svg>Strongly Ordered <span class="st">*</span>/</span></div><div class="ln">    MPU<span class="us">_</span>InitStruct.Enable           = MPU<span class="us">_</span>REGION<span class="us">_</span>ENABLE;</div><div class="ln">    MPU<span class="us">_</span>InitStruct.BaseAddress      = <span class="box"><span class="nm">0x60000000</span>;</span></div><div class="ln">    MPU<span class="us">_</span>InitStruct.Size             = ARM<span class="us">_</span>MPU<span class="us">_</span>REGION<span class="us">_</span>SIZE<span class="us">_</span>64KB;</div><div class="ln">    MPU<span class="us">_</span>InitStruct.AccessPermission = MPU<span class="us">_</span>REGION<span class="us">_</span>FULL<span class="us">_</span>ACCESS;</div><div class="ln">    MPU<span class="us">_</span>InitStruct.IsBufferable     = MPU<span class="us">_</span>ACCESS<span class="us">_</span>BUFFERABLE;</div><div class="ln">    MPU<span class="us">_</span>InitStruct.IsCacheable      = MPU<span class="us">_</span>ACCESS<span class="us">_</span>NOT<span class="us">_</span>CACHEABLE; <span class="cm">/<span class="st">*</span> <svg class="cj" preserveAspectRatio="none" viewBox="0 0 16 16"><use href="#g1"/></svg><svg class="cj" preserveAspectRatio="none" viewBox="0 0 16 16"><use href="#g3"/></svg><svg class="cj" preserveAspectRatio="none" viewBox="0 0 16 16"><use href="#g4"/></svg>MPU<span class="us">_</span>ACCESS<span class="us">_</span>CACHEABLE<svg class="cj" preserveAspectRatio="none" viewBox="0 0 16 16"><use href="#gp"/></svg><svg class="cj" preserveAspectRatio="none" viewBox="0 0 16 16"><use href="#g0"/></svg><svg class="cj" preserveAspectRatio="none" viewBox="0 0 16 16"><use href="#g4"/></svg><svg class="cj" preserveAspectRatio="none" viewBox="0 0 16 16"><use href="#g0"/></svg>2<svg class="cj" preserveAspectRatio="none" viewBox="0 0 16 16"><use href="#g5"/></svg>CS<svg class="cj" preserveAspectRatio="none" viewBox="0 0 16 16"><use href="#gp"/></svg>WE<svg class="cj" preserveAspectRatio="none" viewBox="0 0 16 16"><use href="#g1"/></svg><svg class="cj" preserveAspectRatio="none" viewBox="0 0 16 16"><use href="#g3"/></svg> <span class="st">*</span>/</span></div><div class="ln">    MPU<span class="us">_</span>InitStruct.IsShareable      = MPU<span class="us">_</span>ACCESS<span class="us">_</span>NOT<span class="us">_</span>SHAREABLE;</div><div class="ln">    MPU<span class="us">_</span>InitStruct.Number           = MPU<span class="us">_</span>REGION<span class="us">_</span>NUMBER1;</div><div class="ln">    MPU<span class="us">_</span>InitStruct.TypeExtField     = MPU<span class="us">_</span>TEX<span class="us">_</span>LEVEL0;</div><div class="ln">    MPU<span class="us">_</span>InitStruct.SubRegionDisable = <span class="nm">0x00</span>;</div><div class="ln">    MPU<span class="us">_</span>InitStruct.DisableExec      = MPU<span class="us">_</span>INSTRUCTION<span class="us">_</span>ACCESS<span class="us">_</span>ENABLE;</div><div class="ln"></div><div class="ln">    HAL<span class="us">_</span>MPU<span class="us">_</span>ConfigRegion(&amp;MPU<span class="us">_</span>InitStruct);</div></div>
<div class="fit" style="position:absolute;left:22.76px;top:5px;font-family:'Liberation Sans',sans-serif;font-weight:normal;font-size:12px;line-height:15.00px;white-space:pre;transform-origin:0 0;transform:scaleX(1.0477);">D:\STM32_PRO\H743</div><svg class="abs" style="left:148.5px;top:6px;color:#000;stroke-width:1.6" width="11.9" height="11.9"><use href="#g0"/></svg><svg class="abs" style="left:160.4px;top:6px;color:#000;stroke-width:1.6" width="11.9" height="11.9"><use href="#g3"/></svg><svg class="abs" style="left:172.2px;top:6px;color:#000;stroke-width:1.6" width="11.9" height="11.9"><use href="#g1"/></svg><svg class="abs" style="left:184.1px;top:6px;color:#000;stroke-width:1.6" width="11.9" height="11.9"><use href="#g4"/></svg><div class="abs" style="left:1245px;top:806px;font-size:20px;line-height:24px;color:#8aa491;font-family:'Liberation Sans',sans-serif">@</div><svg class="abs" style="left:1264.5px;top:810px;color:#8aa491" width="17" height="18" viewBox="0 0 16 17"><use href="#w-xi"/></svg><svg class="abs" style="left:1282.2px;top:810px;color:#8aa491" width="17" height="18" viewBox="0 0 16 17"><use href="#w-tu"/></svg><svg class="abs" style="left:1300.0px;top:810px;color:#8aa491" width="17" height="18" viewBox="0 0 16 17"><use href="#w-jue"/></svg><svg class="abs" style="left:1317.8px;top:810px;color:#8aa491" width="17" height="18" viewBox="0 0 16 17"><use href="#w-jin"/></svg><svg class="abs" style="left:1335.5px;top:810px;color:#8aa491" width="17" height="18" viewBox="0 0 16 17"><use href="#w-ji"/></svg><svg class="abs" style="left:1353.2px;top:810px;color:#8aa491" width="17" height="18" viewBox="0 0 16 17"><use href="#w-shu"/></svg><svg class="abs" style="left:1371.0px;top:810px;color:#8aa491" width="17" height="18" viewBox="0 0 16 17"><use href="#w-she"/></svg><svg class="abs" style="left:1388.8px;top:810px;color:#8aa491" width="17" height="18" viewBox="0 0 16 17"><use href="#w-qu"/></svg><div class="fit" style="position:absolute;left:195.50px;top:5px;font-family:'Liberation Sans',sans-serif;font-weight:normal;font-size:12px;line-height:15.00px;white-space:pre;transform-origin:0 0;transform:scaleX(1.0147);">\3 H743 PRO UART LED SYSTICK KEY -</div><svg class="abs" style="left:424.0px;top:6px;color:#000;stroke-width:1.6" width="12.8" height="12.8"><use href="#g0"/></svg><svg class="abs" style="left:436.8px;top:6px;color:#000;stroke-width:1.6" width="12.8" height="12.8"><use href="#g3"/></svg><div class="abs" style="left:1245px;top:806px;font-size:20px;line-height:24px;color:#8aa491;font-family:'Liberation Sans',sans-serif">@</div><svg class="abs" style="left:1264.5px;top:810px;color:#8aa491" width="17" height="18" viewBox="0 0 16 17"><use href="#w-xi"/></svg><svg class="abs" style="left:1282.2px;top:810px;color:#8aa491" width="17" height="18" viewBox="0 0 16 17"><use href="#w-tu"/></svg><svg class="abs" style="left:1300.0px;top:810px;color:#8aa491" width="17" height="18" viewBox="0 0 16 17"><use href="#w-jue"/></svg><svg class="abs" style="left:1317.8px;top:810px;color:#8aa491" width="17" height="18" viewBox="0 0 16 17"><use href="#w-jin"/></svg><svg class="abs" style="left:1335.5px;top:810px;color:#8aa491" width="17" height="18" viewBox="0 0 16 17"><use href="#w-ji"/></svg><svg class="abs" style="left:1353.2px;top:810px;color:#8aa491" width="17" height="18" viewBox="0 0 16 17"><use href="#w-shu"/></svg><svg class="abs" style="left:1371.0px;top:810px;color:#8aa491" width="17" height="18" viewBox="0 0 16 17"><use href="#w-she"/></svg><svg class="abs" style="left:1388.8px;top:810px;color:#8aa491" width="17" height="18" viewBox="0 0 16 17"><use href="#w-qu"/></svg><div class="fit" style="position:absolute;left:450.00px;top:5px;font-family:'Liberation Sans',sans-serif;font-weight:normal;font-size:12px;line-height:15.00px;white-space:pre;transform-origin:0 0;transform:scaleX(1.1024);">\Project\MDK-ARM(uV5)\project.uvprojx - μVision</div><div class="fit mnu" style="position:absolute;left:8.14px;top:27px;font-family:'Liberation Sans',sans-serif;font-weight:normal;font-size:12px;line-height:15.00px;white-space:pre;transform-origin:0 0;transform:scaleX(0.9708);"><u>F</u>ile</div><div class="fit mnu" style="position:absolute;left:41.42px;top:27px;font-family:'Liberation Sans',sans-serif;font-weight:normal;font-size:12px;line-height:15.00px;white-space:pre;transform-origin:0 0;transform:scaleX(0.9903);"><u>E</u>dit</div><div class="fit mnu" style="position:absolute;left:76.84px;top:27px;font-family:'Liberation Sans',sans-serif;font-weight:normal;font-size:12px;line-height:15.00px;white-space:pre;transform-origin:0 0;transform:scaleX(0.9662);"><u>V</u>iew</div><div class="fit mnu" style="position:absolute;left:116.36px;top:27px;font-family:'Liberation Sans',sans-serif;font-weight:normal;font-size:12px;line-height:15.00px;white-space:pre;transform-origin:0 0;transform:scaleX(0.9512);"><u>P</u>roject</div><div class="fit mnu" style="position:absolute;left:166.36px;top:27px;font-family:'Liberation Sans',sans-serif;font-weight:normal;font-size:12px;line-height:15.00px;white-space:pre;transform-origin:0 0;transform:scaleX(0.9529);">Fl<u>a</u>sh</div><div class="fit mnu" style="position:absolute;left:207.98px;top:27px;font-family:'Liberation Sans',sans-serif;font-weight:normal;font-size:12px;line-height:15.00px;white-space:pre;transform-origin:0 0;transform:scaleX(1.0298);"><u>D</u>ebug</div><div class="fit mnu" style="position:absolute;left:258.16px;top:27px;font-family:'Liberation Sans',sans-serif;font-weight:normal;font-size:12px;line-height:15.00px;white-space:pre;transform-origin:0 0;transform:scaleX(0.9514);">Pe<u>r</u>ipherals</div><div class="fit mnu" style="position:absolute;left:330.64px;top:27px;font-family:'Liberation Sans',sans-serif;font-weight:normal;font-size:12px;line-height:15.00px;white-space:pre;transform-origin:0 0;transform:scaleX(0.9660);"><u>T</u>ools</div><div class="fit mnu" style="position:absolute;left:373.76px;top:27px;font-family:'Liberation Sans',sans-serif;font-weight:normal;font-size:12px;line-height:15.00px;white-space:pre;transform-origin:0 0;transform:scaleX(0.8167);"><u>S</u>VCS</div><div class="fit mnu" style="position:absolute;left:415.04px;top:27px;font-family:'Liberation Sans',sans-serif;font-weight:normal;font-size:12px;line-height:15.00px;white-space:pre;transform-origin:0 0;transform:scaleX(1.0314);"><u>W</u>indow</div><div class="fit mnu" style="position:absolute;left:473.53px;top:27px;font-family:'Liberation Sans',sans-serif;font-weight:normal;font-size:12px;line-height:15.00px;white-space:pre;transform-origin:0 0;transform:scaleX(0.9832);"><u>H</u>elp</div><div class="fit" style="position:absolute;left:541.95px;top:54px;font-family:'Liberation Sans',sans-serif;font-weight:normal;font-size:12px;line-height:15.00px;white-space:pre;transform-origin:0 0;transform:scaleX(0.9427);">IsKeyDownFunc</div><div class="fit" style="position:absolute;left:188.07px;top:82px;font-family:'Liberation Sans',sans-serif;font-weight:normal;font-size:12px;line-height:15.00px;white-space:pre;transform-origin:0 0;transform:scaleX(0.9420);">Flash</div><div class="fit" style="position:absolute;left:3.56px;top:105px;font-family:'Liberation Sans',sans-serif;font-weight:normal;font-size:12px;line-height:15.00px;white-space:pre;transform-origin:0 0;transform:scaleX(0.9512);">Project</div><div class="fit" style="position:absolute;left:45.61px;top:127px;font-family:'Liberation Sans',sans-serif;font-weight:normal;font-size:12px;line-height:15.00px;white-space:pre;transform-origin:0 0;transform:scaleX(1.0043);">Project: project</div><div class="fit" style="position:absolute;left:65.25px;top:147px;font-family:'Liberation Sans',sans-serif;font-weight:normal;font-size:12px;line-height:15.00px;white-space:pre;transform-origin:0 0;transform:scaleX(0.9565);">Flash</div><div class="fit" style="position:absolute;left:85.53px;top:167px;font-family:'Liberation Sans',sans-serif;font-weight:normal;font-size:12px;line-height:15.00px;white-space:pre;transform-origin:0 0;transform:scaleX(0.9335);">User</div><div class="fit" style="position:absolute;left:105.67px;top:187px;font-family:'Liberation Sans',sans-serif;font-weight:normal;font-size:12px;line-height:15.00px;white-space:pre;transform-origin:0 0;transform:scaleX(1.0292);">main.c</div><div class="fit" style="position:absolute;left:85.57px;top:207px;font-family:'Liberation Sans',sans-serif;font-weight:normal;font-size:12px;line-height:15.00px;white-space:pre;transform-origin:0 0;transform:scaleX(0.8389);">BSP</div><div class="fit" style="position:absolute;left:105.74px;top:227px;font-family:'Liberation Sans',sans-serif;font-weight:normal;font-size:12px;line-height:15.00px;white-space:pre;transform-origin:0 0;transform:scaleX(0.9757);">bsp.c</div><div class="fit" style="position:absolute;left:105.71px;top:247px;font-family:'Liberation Sans',sans-serif;font-weight:normal;font-size:12px;line-height:15.00px;white-space:pre;transform-origin:0 0;transform:scaleX(1.0140);">bsp.h</div><div class="fit" style="position:absolute;left:105.75px;top:267px;font-family:'Liberation Sans',sans-serif;font-weight:normal;font-size:12px;line-height:15.00px;white-space:pre;transform-origin:0 0;transform:scaleX(0.9612);">bsp_led.c</div><div class="fit" style="position:absolute;left:105.74px;top:287px;font-family:'Liberation Sans',sans-serif;font-weight:normal;font-size:12px;line-height:15.00px;white-space:pre;transform-origin:0 0;transform:scaleX(0.9793);">bsp_uart_fifo.c</div><div class="fit" style="position:absolute;left:106.18px;top:307px;font-family:'Liberation Sans',sans-serif;font-weight:normal;font-size:12px;line-height:15.00px;white-space:pre;transform-origin:0 0;transform:scaleX(0.9738);">stm32h7xx_it.c</div><div class="fit" style="position:absolute;left:105.72px;top:327px;font-family:'Liberation Sans',sans-serif;font-weight:normal;font-size:12px;line-height:15.00px;white-space:pre;transform-origin:0 0;transform:scaleX(0.9993);">bsp_timer.c</div><div class="fit" style="position:absolute;left:105.75px;top:347px;font-family:'Liberation Sans',sans-serif;font-weight:normal;font-size:12px;line-height:15.00px;white-space:pre;transform-origin:0 0;transform:scaleX(0.9631);">bsp_key.c</div><div class="fit" style="position:absolute;left:85.39px;top:367px;font-family:'Liberation Sans',sans-serif;font-weight:normal;font-size:12px;line-height:15.00px;white-space:pre;transform-origin:0 0;transform:scaleX(1.0172);">MDK-ARM</div><div class="fit" style="position:absolute;left:106.18px;top:387px;font-family:'Liberation Sans',sans-serif;font-weight:normal;font-size:12px;line-height:15.00px;white-space:pre;transform-origin:0 0;transform:scaleX(0.9592);">startup_stm32h743xx.s</div><div class="fit" style="position:absolute;left:85.44px;top:407px;font-family:'Liberation Sans',sans-serif;font-weight:normal;font-size:12px;line-height:15.00px;white-space:pre;transform-origin:0 0;transform:scaleX(0.9681);">HAL_Driver</div><div class="fit" style="position:absolute;left:85.85px;top:427px;font-family:'Liberation Sans',sans-serif;font-weight:normal;font-size:12px;line-height:15.00px;white-space:pre;transform-origin:0 0;transform:scaleX(0.9140);">CMSIS</div>
<div class="rbox" style="left:730px;top:399px"></div>
<div class="rbox" style="left:730px;top:655px"></div>
</body></html>
